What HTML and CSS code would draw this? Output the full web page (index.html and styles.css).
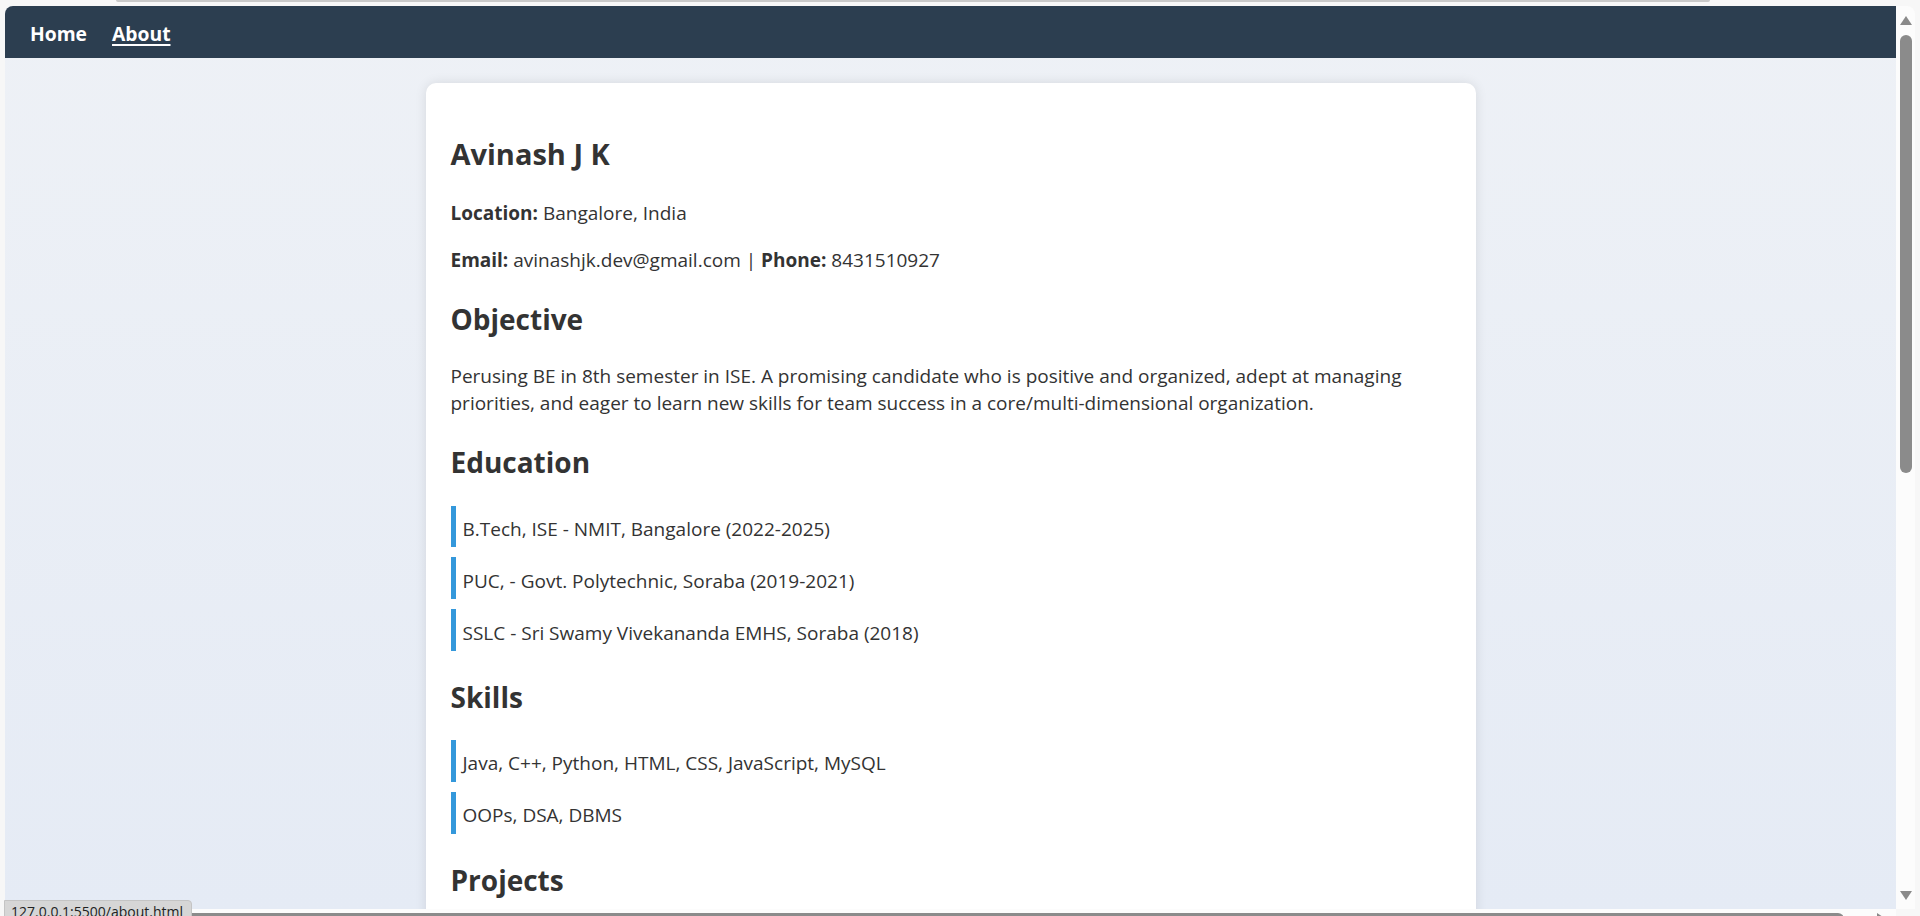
FILE: index.html
```html
<!DOCTYPE html>
<html lang="en">
<head>
<meta charset="utf-8">
<title>About - Avinash J K</title>
<link rel="stylesheet" href="styles.css">
</head>
<body>
  <div class="topbar"><div class="topline"></div></div>
  <div class="frame">
    <div class="viewport">
      <nav class="nav">
        <a class="nav-link" href="#">Home</a>
        <a class="nav-link active" href="#">About</a>
      </nav>
      <main class="page">
        <div class="card">
          <h1 class="name">Avinash J K</h1>
          <p class="line"><strong>Location:</strong> Bangalore, India</p>
          <p class="line"><strong>Email:</strong> avinashjk.dev@gmail.com | <strong>Phone:</strong> 8431510927</p>

          <h2 class="section-title">Objective</h2>
          <p class="line summary">Perusing BE in 8th semester in ISE. A promising candidate who is positive and organized, adept at managing priorities, and eager to learn new skills for team success in a core/multi-dimensional organization.</p>

          <h2 class="section-title">Education</h2>
          <ul class="items">
            <li class="item">B.Tech, ISE - NMIT, Bangalore (2022-2025)</li>
            <li class="item">PUC, - Govt. Polytechnic, Soraba (2019-2021)</li>
            <li class="item">SSLC - Sri Swamy Vivekananda EMHS, Soraba (2018)</li>
          </ul>

          <h2 class="section-title">Skills</h2>
          <ul class="items">
            <li class="item">Java, C++, Python, HTML, CSS, JavaScript, MySQL</li>
            <li class="item">OOPs, DSA, DBMS</li>
          </ul>

          <h2 class="section-title">Projects</h2>
        </div>
      </main>
    </div>
    <div class="vscroll">
      <div class="arrow-up"></div>
      <div class="vthumb"></div>
      <div class="vspacer"></div>
      <div class="arrow-down"></div>
    </div>
  </div>
  <div class="hscroll">
    <div class="hthumb"></div>
    <div class="arrow-right"></div>
  </div>
  <div class="status">127.0.0.1:5500/about.html</div>
</body>
</html>
```

FILE: styles.css
```css
html, body {
  margin: 0;
  padding: 0;
}

body {
  width: 1920px;
  height: 916px;
  overflow: hidden;
  background: #f7f7f7;
  position: relative;
  font-family: "Open Sans", "Noto Sans", "Liberation Sans", sans-serif;
  color: #333;
}

/* browser chrome remnants */
.topbar {
  height: 6px;
  display: flex;
  padding-left: 116px;
}

.topline {
  width: 1594px;
  height: 2px;
  background: #c9c9c9;
  border-radius: 0 0 2px 2px;
}

.frame {
  display: flex;
  height: 903px;
  padding: 0 5px;
}

.viewport {
  flex: 1;
  overflow: hidden;
  border-top-left-radius: 8px;
  display: flex;
  flex-direction: column;
  background: linear-gradient(180deg, #eef1f6 0%, #e5ebf5 100%);
}

/* navigation */
.nav {
  flex: none;
  background: #2c3e50;
  padding: 15px 25px 10px;
  display: flex;
  gap: 25px;
}

.nav-link {
  color: #ffffff;
  font-weight: 700;
  font-size: 19.3px;
  line-height: 26.6px;
  text-decoration: none;
}

.nav-link.active {
  text-decoration: underline;
  text-underline-offset: 3px;
  text-decoration-thickness: 2px;
}

/* page */
.page {
  flex: 1;
  padding-top: 25px;
}

.card {
  width: 1000px;
  margin: 0 auto;
  padding: 25px;
  background: #ffffff;
  border-radius: 10px;
  box-shadow: 0 0 12px rgba(0, 0, 0, 0.1);
}

.name,
.section-title {
  font-size: 28px;
  line-height: 40px;
  font-weight: 700;
  color: #333;
}

.name {
  font-size: 29px;
  margin: 26px 0 26.4px;
}

.section-title {
  margin: 25.7px 0 23.2px;
}

.line {
  font-size: 19px;
  line-height: 26.6px;
  margin: 20px 0;
}

.line.summary {
  margin-top: 24.6px;
}

.line strong {
  font-weight: 700;
}

.items {
  list-style: none;
  margin: 0;
  padding: 0;
}

.item {
  font-size: 19px;
  line-height: 26.6px;
  border-left: 5px solid #3498db;
  padding: 10.2px 10px 5.2px 7px;
  margin-bottom: 10px;
}

/* scrollbars */
.vscroll {
  width: 19px;
  background: #fcfcfc;
  border-top-right-radius: 8px;
  display: flex;
  flex-direction: column;
  align-items: center;
  padding: 10px 0 9px;
  box-sizing: border-box;
}

.arrow-up {
  width: 0;
  height: 0;
  border-left: 6px solid transparent;
  border-right: 6px solid transparent;
  border-bottom: 9px solid #8a8a8a;
}

.vthumb {
  margin-top: 10px;
  width: 12px;
  height: 438px;
  border-radius: 6px;
  background: #8b8b8b;
}

.vspacer {
  flex: 1;
}

.arrow-down {
  width: 0;
  height: 0;
  border-left: 6px solid transparent;
  border-right: 6px solid transparent;
  border-top: 9px solid #8a8a8a;
}

.hscroll {
  height: 7px;
  margin: 0 24px 0 5px;
  background: #fcfcfc;
  display: flex;
  align-items: flex-start;
  padding: 4px 10px 0 30px;
  box-sizing: border-box;
}

.hthumb {
  width: 1815px;
  height: 12px;
  border-radius: 6px;
  background: #8b8b8b;
}

.arrow-right {
  margin-left: 33px;
  width: 0;
  height: 0;
  border-top: 6px solid transparent;
  border-bottom: 6px solid transparent;
  border-left: 9px solid #8a8a8a;
}

/* status bubble (overlay) */
.status {
  position: absolute;
  left: 4px;
  top: 900px;
  width: 180px;
  height: 30px;
  padding-left: 6px;
  background: #d6d6d6;
  border: 1px solid #c4c4c4;
  border-top-right-radius: 4px;
  font-family: "Open Sans", "Liberation Sans", sans-serif;
  font-size: 14px;
  line-height: 22px;
  color: #222;
  white-space: nowrap;
  overflow: hidden;
}
```
